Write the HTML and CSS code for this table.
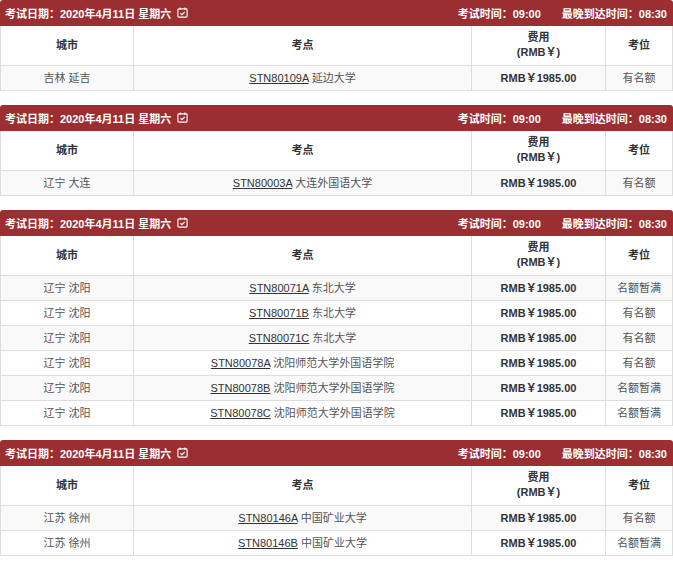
FILE: index.html
```html
<!DOCTYPE html>
<html lang="zh">
<head>
<meta charset="utf-8">
<link rel="stylesheet" href="styles.css">
</head>
<body>
<div class="page">

  <section class="session">
    <div class="bar">
      <div class="bar-left">考试日期：2020年4月11日 星期六 <svg class="cal" viewBox="0 0 12 12" width="11" height="11"><rect x="1" y="2" width="10" height="9" rx="1" fill="none" stroke="#fff" stroke-width="1.2"/><line x1="3.5" y1="0.5" x2="3.5" y2="3" stroke="#fff" stroke-width="1.2"/><line x1="8.5" y1="0.5" x2="8.5" y2="3" stroke="#fff" stroke-width="1.2"/><polyline points="3.8,6.8 5.4,8.3 8.4,5.2" fill="none" stroke="#fff" stroke-width="1.2"/></svg></div>
      <div class="bar-right"><span>考试时间：09:00</span><span>最晚到达时间：08:30</span></div>
    </div>
    <table class="grid">
      <colgroup><col class="c1"><col class="c2"><col class="c3"><col class="c4"></colgroup>
      <thead><tr><th>城市</th><th>考点</th><th>费用<br>(RMB￥)</th><th>考位</th></tr></thead>
      <tbody>
        <tr><td>吉林 延吉</td><td><a href="#">STN80109A</a> 延边大学</td><td class="fee">RMB￥1985.00</td><td>有名额</td></tr>
      </tbody>
    </table>
  </section>

  <section class="session">
    <div class="bar">
      <div class="bar-left">考试日期：2020年4月11日 星期六 <svg class="cal" viewBox="0 0 12 12" width="11" height="11"><rect x="1" y="2" width="10" height="9" rx="1" fill="none" stroke="#fff" stroke-width="1.2"/><line x1="3.5" y1="0.5" x2="3.5" y2="3" stroke="#fff" stroke-width="1.2"/><line x1="8.5" y1="0.5" x2="8.5" y2="3" stroke="#fff" stroke-width="1.2"/><polyline points="3.8,6.8 5.4,8.3 8.4,5.2" fill="none" stroke="#fff" stroke-width="1.2"/></svg></div>
      <div class="bar-right"><span>考试时间：09:00</span><span>最晚到达时间：08:30</span></div>
    </div>
    <table class="grid">
      <colgroup><col class="c1"><col class="c2"><col class="c3"><col class="c4"></colgroup>
      <thead><tr><th>城市</th><th>考点</th><th>费用<br>(RMB￥)</th><th>考位</th></tr></thead>
      <tbody>
        <tr><td>辽宁 大连</td><td><a href="#">STN80003A</a> 大连外国语大学</td><td class="fee">RMB￥1985.00</td><td>有名额</td></tr>
      </tbody>
    </table>
  </section>

  <section class="session">
    <div class="bar">
      <div class="bar-left">考试日期：2020年4月11日 星期六 <svg class="cal" viewBox="0 0 12 12" width="11" height="11"><rect x="1" y="2" width="10" height="9" rx="1" fill="none" stroke="#fff" stroke-width="1.2"/><line x1="3.5" y1="0.5" x2="3.5" y2="3" stroke="#fff" stroke-width="1.2"/><line x1="8.5" y1="0.5" x2="8.5" y2="3" stroke="#fff" stroke-width="1.2"/><polyline points="3.8,6.8 5.4,8.3 8.4,5.2" fill="none" stroke="#fff" stroke-width="1.2"/></svg></div>
      <div class="bar-right"><span>考试时间：09:00</span><span>最晚到达时间：08:30</span></div>
    </div>
    <table class="grid">
      <colgroup><col class="c1"><col class="c2"><col class="c3"><col class="c4"></colgroup>
      <thead><tr><th>城市</th><th>考点</th><th>费用<br>(RMB￥)</th><th>考位</th></tr></thead>
      <tbody>
        <tr><td>辽宁 沈阳</td><td><a href="#">STN80071A</a> 东北大学</td><td class="fee">RMB￥1985.00</td><td>名额暂满</td></tr>
        <tr><td>辽宁 沈阳</td><td><a href="#">STN80071B</a> 东北大学</td><td class="fee">RMB￥1985.00</td><td>有名额</td></tr>
        <tr><td>辽宁 沈阳</td><td><a href="#">STN80071C</a> 东北大学</td><td class="fee">RMB￥1985.00</td><td>有名额</td></tr>
        <tr><td>辽宁 沈阳</td><td><a href="#">STN80078A</a> 沈阳师范大学外国语学院</td><td class="fee">RMB￥1985.00</td><td>有名额</td></tr>
        <tr><td>辽宁 沈阳</td><td><a href="#">STN80078B</a> 沈阳师范大学外国语学院</td><td class="fee">RMB￥1985.00</td><td>名额暂满</td></tr>
        <tr><td>辽宁 沈阳</td><td><a href="#">STN80078C</a> 沈阳师范大学外国语学院</td><td class="fee">RMB￥1985.00</td><td>名额暂满</td></tr>
      </tbody>
    </table>
  </section>

  <section class="session">
    <div class="bar">
      <div class="bar-left">考试日期：2020年4月11日 星期六 <svg class="cal" viewBox="0 0 12 12" width="11" height="11"><rect x="1" y="2" width="10" height="9" rx="1" fill="none" stroke="#fff" stroke-width="1.2"/><line x1="3.5" y1="0.5" x2="3.5" y2="3" stroke="#fff" stroke-width="1.2"/><line x1="8.5" y1="0.5" x2="8.5" y2="3" stroke="#fff" stroke-width="1.2"/><polyline points="3.8,6.8 5.4,8.3 8.4,5.2" fill="none" stroke="#fff" stroke-width="1.2"/></svg></div>
      <div class="bar-right"><span>考试时间：09:00</span><span>最晚到达时间：08:30</span></div>
    </div>
    <table class="grid">
      <colgroup><col class="c1"><col class="c2"><col class="c3"><col class="c4"></colgroup>
      <thead><tr><th>城市</th><th>考点</th><th>费用<br>(RMB￥)</th><th>考位</th></tr></thead>
      <tbody>
        <tr><td>江苏 徐州</td><td><a href="#">STN80146A</a> 中国矿业大学</td><td class="fee">RMB￥1985.00</td><td>有名额</td></tr>
        <tr><td>江苏 徐州</td><td><a href="#">STN80146B</a> 中国矿业大学</td><td class="fee">RMB￥1985.00</td><td>名额暂满</td></tr>
      </tbody>
    </table>
  </section>

</div>
</body>
</html>
```
FILE: styles.css
```css
html, body {
  margin: 0;
  padding: 0;
  background: #fff;
}
body {
  font-family: "Liberation Sans", Arial, "Noto Sans CJK SC", sans-serif;
  font-size: 11px;
  color: #555;
}
.page {
  width: 673px;
}
.session {
  margin-bottom: 14px;
}
.bar {
  height: 25.5px;
  background: #9b2e31;
  color: #fff;
  font-size: 11px;
  font-weight: bold;
  display: flex;
  justify-content: space-between;
  align-items: center;
  padding: 0 6px 0 5px;
  border-radius: 3px 3px 0 0;
}
.bar-left {
  display: flex;
  align-items: center;
  gap: 4px;
}
.cal {
  display: block;
  margin-left: 2px;
}
.bar-right {
  display: flex;
  gap: 21px;
}
.grid {
  width: 673px;
  border-collapse: collapse;
  table-layout: fixed;
  border: 1px solid #ddd;
  border-top: none;
}
.c1 { width: 133px; }
.c3 { width: 134px; }
.c4 { width: 67px; }
.grid th, .grid td {
  border: 1px solid #ddd;
  text-align: center;
  vertical-align: middle;
  padding: 0;
}
.grid th {
  height: 39.5px;
  font-size: 11px;
  line-height: 15px;
  color: #333;
  font-weight: bold;
  background: #fff;
  border-top: none;
}
.grid td {
  height: 24px;
  font-size: 11px;
  line-height: 15px;
}
.grid tbody tr:nth-child(odd) td {
  background: #f9f9f9;
}
.grid a {
  color: #333;
  text-decoration: underline;
}
.fee {
  font-weight: bold;
  color: #333;
}
```
